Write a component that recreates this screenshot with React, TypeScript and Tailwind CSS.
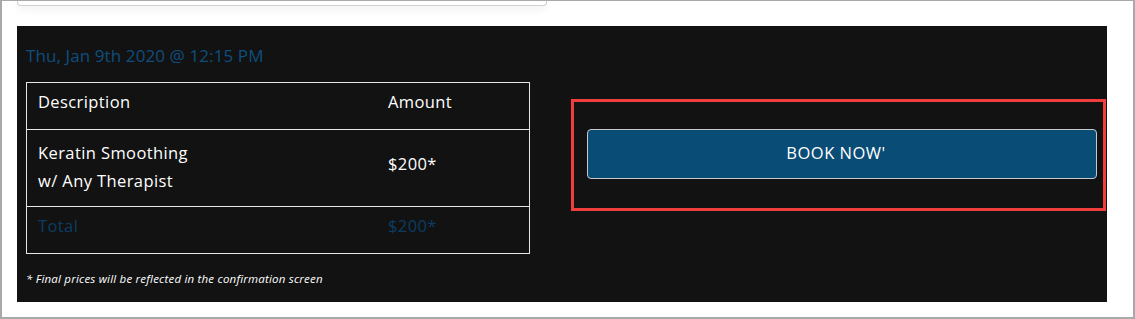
import React from "react";

export default function App() {
  const font = { fontFamily: '"Open Sans", "Liberation Sans", sans-serif' };
  return (
    <div
      className="w-[1135px] h-[319px] bg-white border-x-2 border-b-2 border-t border-[#a9a9a9] overflow-hidden box-border"
      style={font}
    >
      {/* bottom of card above */}
      <div className="ml-[15px] w-[530px] h-[5px] border-x border-b border-[#cfcfcf] rounded-b-[4px] shadow-[0_3px_8px_rgba(0,0,0,0.08)]" />
      <div className="ml-[15px] mt-[20px] w-[1090px] h-[276px] bg-[#121212] pl-[9px] pt-[18px] flex">
        <div className="w-[504px] flex flex-col">
          <div className="text-[17px] leading-[24px] text-[#0e4e7f] tracking-[0.1px]">
            Thu, Jan 9th 2020 @ 12:15 PM
          </div>
          <div className="mt-[14px] border border-[#e6e6e6] text-white text-[16.5px] tracking-[0.4px]">
            <div className="flex h-[47px] pt-[7px] leading-[24px] border-b border-[#e6e6e6]">
              <div className="w-[361px] pl-[11px]">Description</div>
              <div>Amount</div>
            </div>
            <div className="flex h-[77px] border-b border-[#e6e6e6]">
              <div className="w-[361px] pl-[11px] pt-[9px] leading-[28px]">
                <div>Keratin Smoothing</div>
                <div>w/ Any Therapist</div>
              </div>
              <div className="flex items-center pb-[7px]">$200*</div>
            </div>
            <div className="flex h-[46px] pt-[7px] leading-[24px] text-[#0b3d63]">
              <div className="w-[361px] pl-[11px]">Total</div>
              <div>$200*</div>
            </div>
          </div>
          <div className="mt-[16px] text-[11.5px] italic text-white tracking-[0.2px]">
            * Final prices will be reflected in the confirmation screen
          </div>
        </div>
        <div className="ml-[41px] mt-[55px] w-[535px] h-[112px] border-[3px] border-[#f03e3e] pt-[27px] pl-[13px] pr-[6px]">
          <button className="w-full h-[50px] bg-[#094c76] border border-[#c8c8c8] rounded-[4px] text-white text-[16.5px] tracking-[0.5px] flex items-center justify-center pr-[12px] pb-[2px]">
            BOOK NOW'
          </button>
        </div>
      </div>
    </div>
  );
}
